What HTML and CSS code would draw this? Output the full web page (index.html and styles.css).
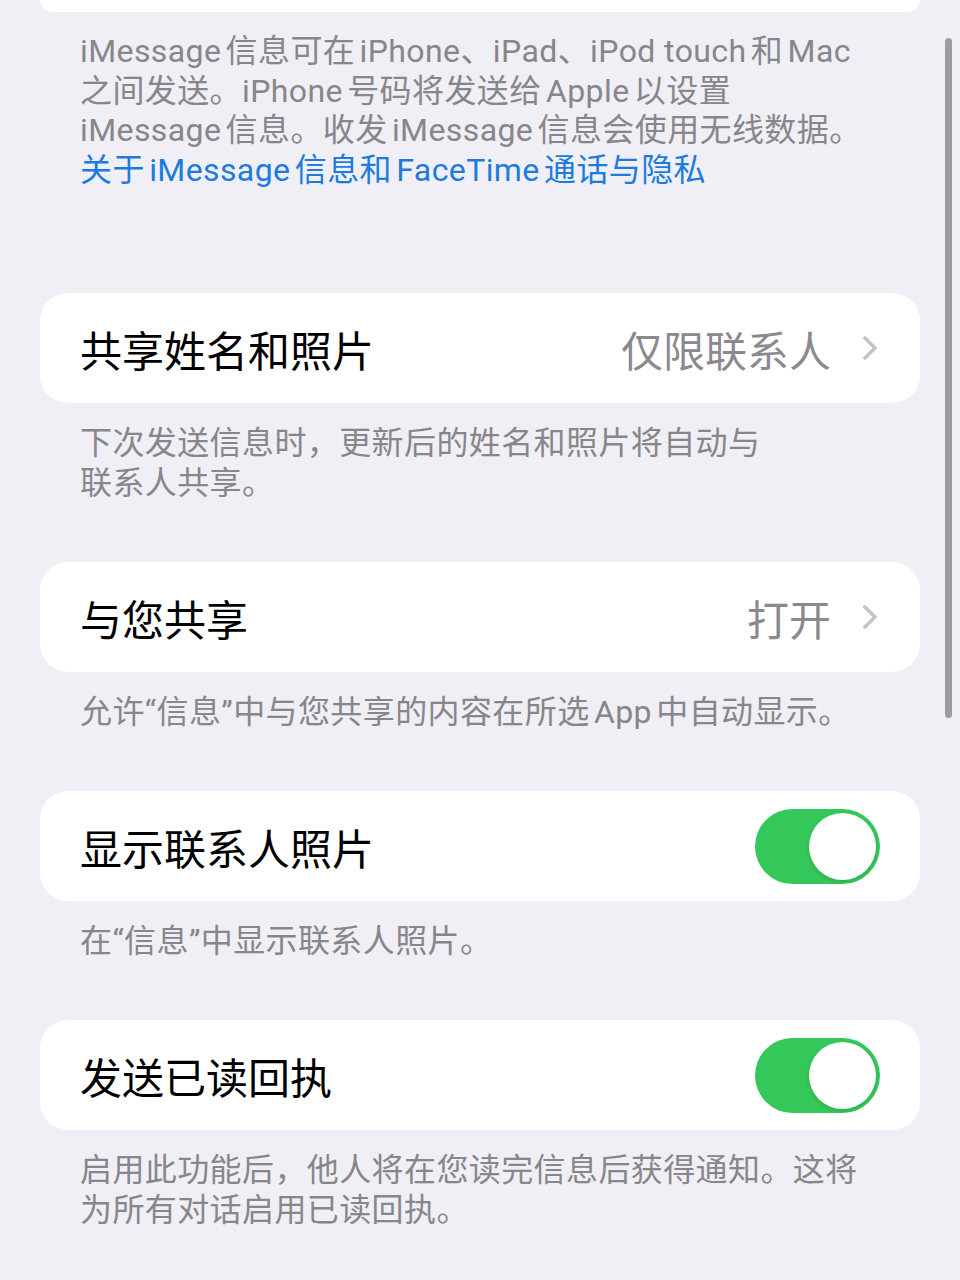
FILE: index.html
```html
<!DOCTYPE html>
<html lang="zh-CN">
<head>
    <meta charset="utf-8">
    <title>信息</title>
    <link rel="stylesheet" href="styles.css">
</head>
<body>
    <div class="settings">
        <!-- tail of the group above -->
        <div class="group group-top"></div>
        <div class="footer footer-top">
            iMessage 信息可在 iPhone、iPad、<span class="word">iPod touch</span> 和 Mac<br>
            之间发送。iPhone 号码将发送给 Apple 以设置<br>
            iMessage 信息。收发 iMessage 信息会使用无线数据。<br>
            <span class="link">关于 iMessage 信息和 FaceTime 通话与隐私</span>
        </div>

        <div class="group">
            <div class="row">
                <span class="label">共享姓名和照片</span>
                <span class="value">仅限联系人</span>
                <span class="chevron"></span>
            </div>
        </div>
        <div class="footer">下次发送信息时，更新后的姓名和照片将自动与<br>联系人共享。</div>

        <div class="group">
            <div class="row">
                <span class="label">与您共享</span>
                <span class="value">打开</span>
                <span class="chevron"></span>
            </div>
        </div>
        <div class="footer">允许“信息”中与您共享的内容在所选 App 中自动显示。</div>

        <div class="group">
            <div class="row">
                <span class="label">显示联系人照片</span>
                <span class="switch on"><span class="knob"></span></span>
            </div>
        </div>
        <div class="footer">在“信息”中显示联系人照片。</div>

        <div class="group">
            <div class="row">
                <span class="label">发送已读回执</span>
                <span class="switch on"><span class="knob"></span></span>
            </div>
        </div>
        <div class="footer">启用此功能后，他人将在您读完信息后获得通知。这将<br>为所有对话启用已读回执。</div>
    </div>

    <!-- scroll indicator -->
    <div class="scroll-indicator"></div>
</body>
</html>
```

FILE: styles.css
```css
body {
    margin: 0;
    background: #f0eff5;
    font-family: Roboto, "Noto Sans CJK SC", sans-serif;
    color: #000;
    overflow: hidden;
}

.settings {
    padding: 0 40px;
    display: flex;
    flex-direction: column;
}

.group {
    background: #fff;
    border-radius: 28px;
    overflow: hidden;
}

.group-top {
    height: 12px;
    border-radius: 0 0 28px 28px;
}

.row {
    height: 110px;
    display: flex;
    align-items: center;
    padding: 0 40px;
}

.label {
    font-size: 42px;
    flex: 1;
}

.value {
    font-size: 42px;
    color: #8a8a8e;
}

.chevron {
    width: 14px;
    height: 14px;
    border-top: 4px solid #c4c4c7;
    border-right: 4px solid #c4c4c7;
    border-radius: 2px;
    transform: rotate(45deg);
    margin-left: 25px;
    margin-right: 6px;
}

.switch {
    width: 125px;
    height: 75px;
    border-radius: 38px;
    background: #e9e9eb;
    display: flex;
    align-items: center;
    padding: 0 4px;
    box-sizing: border-box;
}

.switch.on {
    background: #34c759;
    justify-content: flex-end;
}

.knob {
    width: 67px;
    height: 67px;
    border-radius: 50%;
    background: #fff;
    box-shadow: 0 2px 4px rgba(0, 0, 0, 0.12);
}

.footer {
    font-size: 32px;
    letter-spacing: 0.4px;
    word-spacing: -4px;
    line-height: 40px;
    color: #86868b;
    padding: 20px 40px 0;
    margin-bottom: 59px;
}

.footer-top {
    line-height: 39.5px;
    margin-bottom: 103px;
}

/* latin words keep their normal gap */
.word {
    word-spacing: normal;
}

.link {
    color: #1d7be0;
}

.scroll-indicator {
    position: absolute;
    left: 945px;
    top: 38px;
    width: 7px;
    height: 680px;
    border-radius: 4px;
    background: #9d9da1;
}
```
